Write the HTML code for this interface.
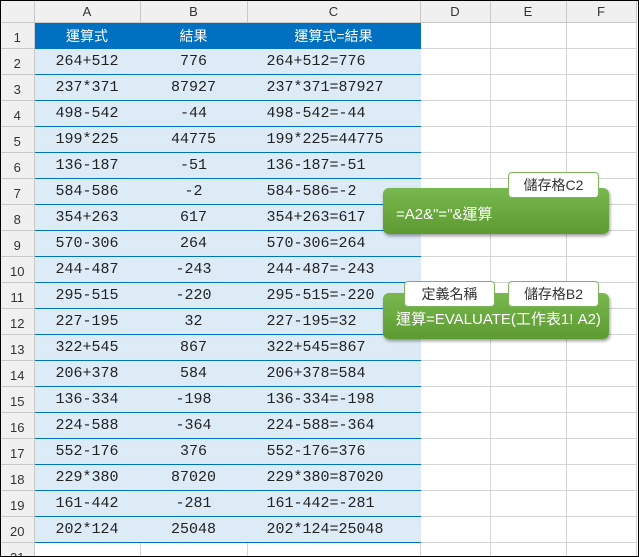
<!DOCTYPE html><html><head><meta charset="utf-8"><style>
body{margin:0;width:639px;height:557px;overflow:hidden;background:#fff;font-family:"Liberation Sans","Noto Sans CJK TC",sans-serif;position:relative}
.frame{position:absolute;left:0;top:0;width:637px;height:555px;border:1px solid #000;pointer-events:none;z-index:9}
.wrap{position:absolute;left:1px;top:1px;width:637px;height:555px;overflow:hidden}
table{border-collapse:collapse;table-layout:fixed}
td{height:25px;border-right:1px solid #d4d4d4;border-bottom:1px solid #d4d4d4;padding:0;text-align:center;font-size:14px;color:#333;white-space:nowrap;overflow:hidden}
tr.h td{height:21px;background:#f0f0f0;font-size:13px;color:#333;border-color:#c8c8c8}
td.rh{background:#f0f0f0;font-size:13px;color:#333;border-color:#c8c8c8;padding-top:4px;height:21px}
tr.t td.d{background:#0070c0;color:#fff;border-right-color:#0070c0;border-bottom:1px solid #0070c0;font-size:14px}
td.d{background:#ddebf7;border-right-color:#ddebf7;border-bottom:1.5px solid #0070c0;font-family:"Liberation Mono","Noto Sans CJK TC",monospace;font-size:15px;color:#222}
td.l{text-align:left;padding-left:19px}
.box{position:absolute;left:383px;width:226px;height:46px;border-radius:6px;background:linear-gradient(#79b84e,#5d9b32);box-shadow:1px 2px 3px rgba(0,0,0,.4);color:#fff;font-size:15px;z-index:5}
.box span{position:absolute;left:13px;bottom:10px}
.tag{position:absolute;width:89px;height:24px;background:#fff;border:1px solid #7ab55a;border-radius:4px;text-align:center;line-height:24px;font-size:14px;color:#333;z-index:6}
</style></head><body>
<div class="wrap"><table>
<colgroup><col style="width:33px"><col style="width:106px"><col style="width:107px"><col style="width:173px"><col style="width:70px"><col style="width:76px"><col style="width:70px"></colgroup>
<tr class="h"><td style="background:#f0f0f0"></td><td>A</td><td>B</td><td>C</td><td>D</td><td>E</td><td>F</td></tr>
<tr class="t"><td class="rh">1</td><td class="d" style="font-family:'Liberation Sans','Noto Sans CJK TC',sans-serif">運算式</td><td class="d" style="font-family:'Liberation Sans','Noto Sans CJK TC',sans-serif">結果</td><td class="d" style="font-family:'Liberation Sans','Noto Sans CJK TC',sans-serif">運算式=結果</td><td></td><td></td><td></td></tr>
<tr><td class="rh">2</td><td class="d">264+512</td><td class="d">776</td><td class="d l">264+512=776</td><td></td><td></td><td></td></tr>
<tr><td class="rh">3</td><td class="d">237*371</td><td class="d">87927</td><td class="d l">237*371=87927</td><td></td><td></td><td></td></tr>
<tr><td class="rh">4</td><td class="d">498-542</td><td class="d">-44</td><td class="d l">498-542=-44</td><td></td><td></td><td></td></tr>
<tr><td class="rh">5</td><td class="d">199*225</td><td class="d">44775</td><td class="d l">199*225=44775</td><td></td><td></td><td></td></tr>
<tr><td class="rh">6</td><td class="d">136-187</td><td class="d">-51</td><td class="d l">136-187=-51</td><td></td><td></td><td></td></tr>
<tr><td class="rh">7</td><td class="d">584-586</td><td class="d">-2</td><td class="d l">584-586=-2</td><td></td><td></td><td></td></tr>
<tr><td class="rh">8</td><td class="d">354+263</td><td class="d">617</td><td class="d l">354+263=617</td><td></td><td></td><td></td></tr>
<tr><td class="rh">9</td><td class="d">570-306</td><td class="d">264</td><td class="d l">570-306=264</td><td></td><td></td><td></td></tr>
<tr><td class="rh">10</td><td class="d">244-487</td><td class="d">-243</td><td class="d l">244-487=-243</td><td></td><td></td><td></td></tr>
<tr><td class="rh">11</td><td class="d">295-515</td><td class="d">-220</td><td class="d l">295-515=-220</td><td></td><td></td><td></td></tr>
<tr><td class="rh">12</td><td class="d">227-195</td><td class="d">32</td><td class="d l">227-195=32</td><td></td><td></td><td></td></tr>
<tr><td class="rh">13</td><td class="d">322+545</td><td class="d">867</td><td class="d l">322+545=867</td><td></td><td></td><td></td></tr>
<tr><td class="rh">14</td><td class="d">206+378</td><td class="d">584</td><td class="d l">206+378=584</td><td></td><td></td><td></td></tr>
<tr><td class="rh">15</td><td class="d">136-334</td><td class="d">-198</td><td class="d l">136-334=-198</td><td></td><td></td><td></td></tr>
<tr><td class="rh">16</td><td class="d">224-588</td><td class="d">-364</td><td class="d l">224-588=-364</td><td></td><td></td><td></td></tr>
<tr><td class="rh">17</td><td class="d">552-176</td><td class="d">376</td><td class="d l">552-176=376</td><td></td><td></td><td></td></tr>
<tr><td class="rh">18</td><td class="d">229*380</td><td class="d">87020</td><td class="d l">229*380=87020</td><td></td><td></td><td></td></tr>
<tr><td class="rh">19</td><td class="d">161-442</td><td class="d">-281</td><td class="d l">161-442=-281</td><td></td><td></td><td></td></tr>
<tr><td class="rh">20</td><td class="d">202*124</td><td class="d">25048</td><td class="d l">202*124=25048</td><td></td><td></td><td></td></tr>
<tr><td class="rh">21</td><td></td><td></td><td></td><td></td><td></td><td></td></tr>
</table></div>
<div class="box" style="top:188px"><span>=A2&amp;"="&amp;運算</span></div>
<div class="tag" style="left:508px;top:172px">儲存格C2</div>
<div class="box" style="top:293px"><span>運算=EVALUATE(工作表1! A2)</span></div>
<div class="tag" style="left:404px;top:281px">定義名稱</div>
<div class="tag" style="left:508px;top:281px">儲存格B2</div>
<div class="frame"></div>
</body></html>
